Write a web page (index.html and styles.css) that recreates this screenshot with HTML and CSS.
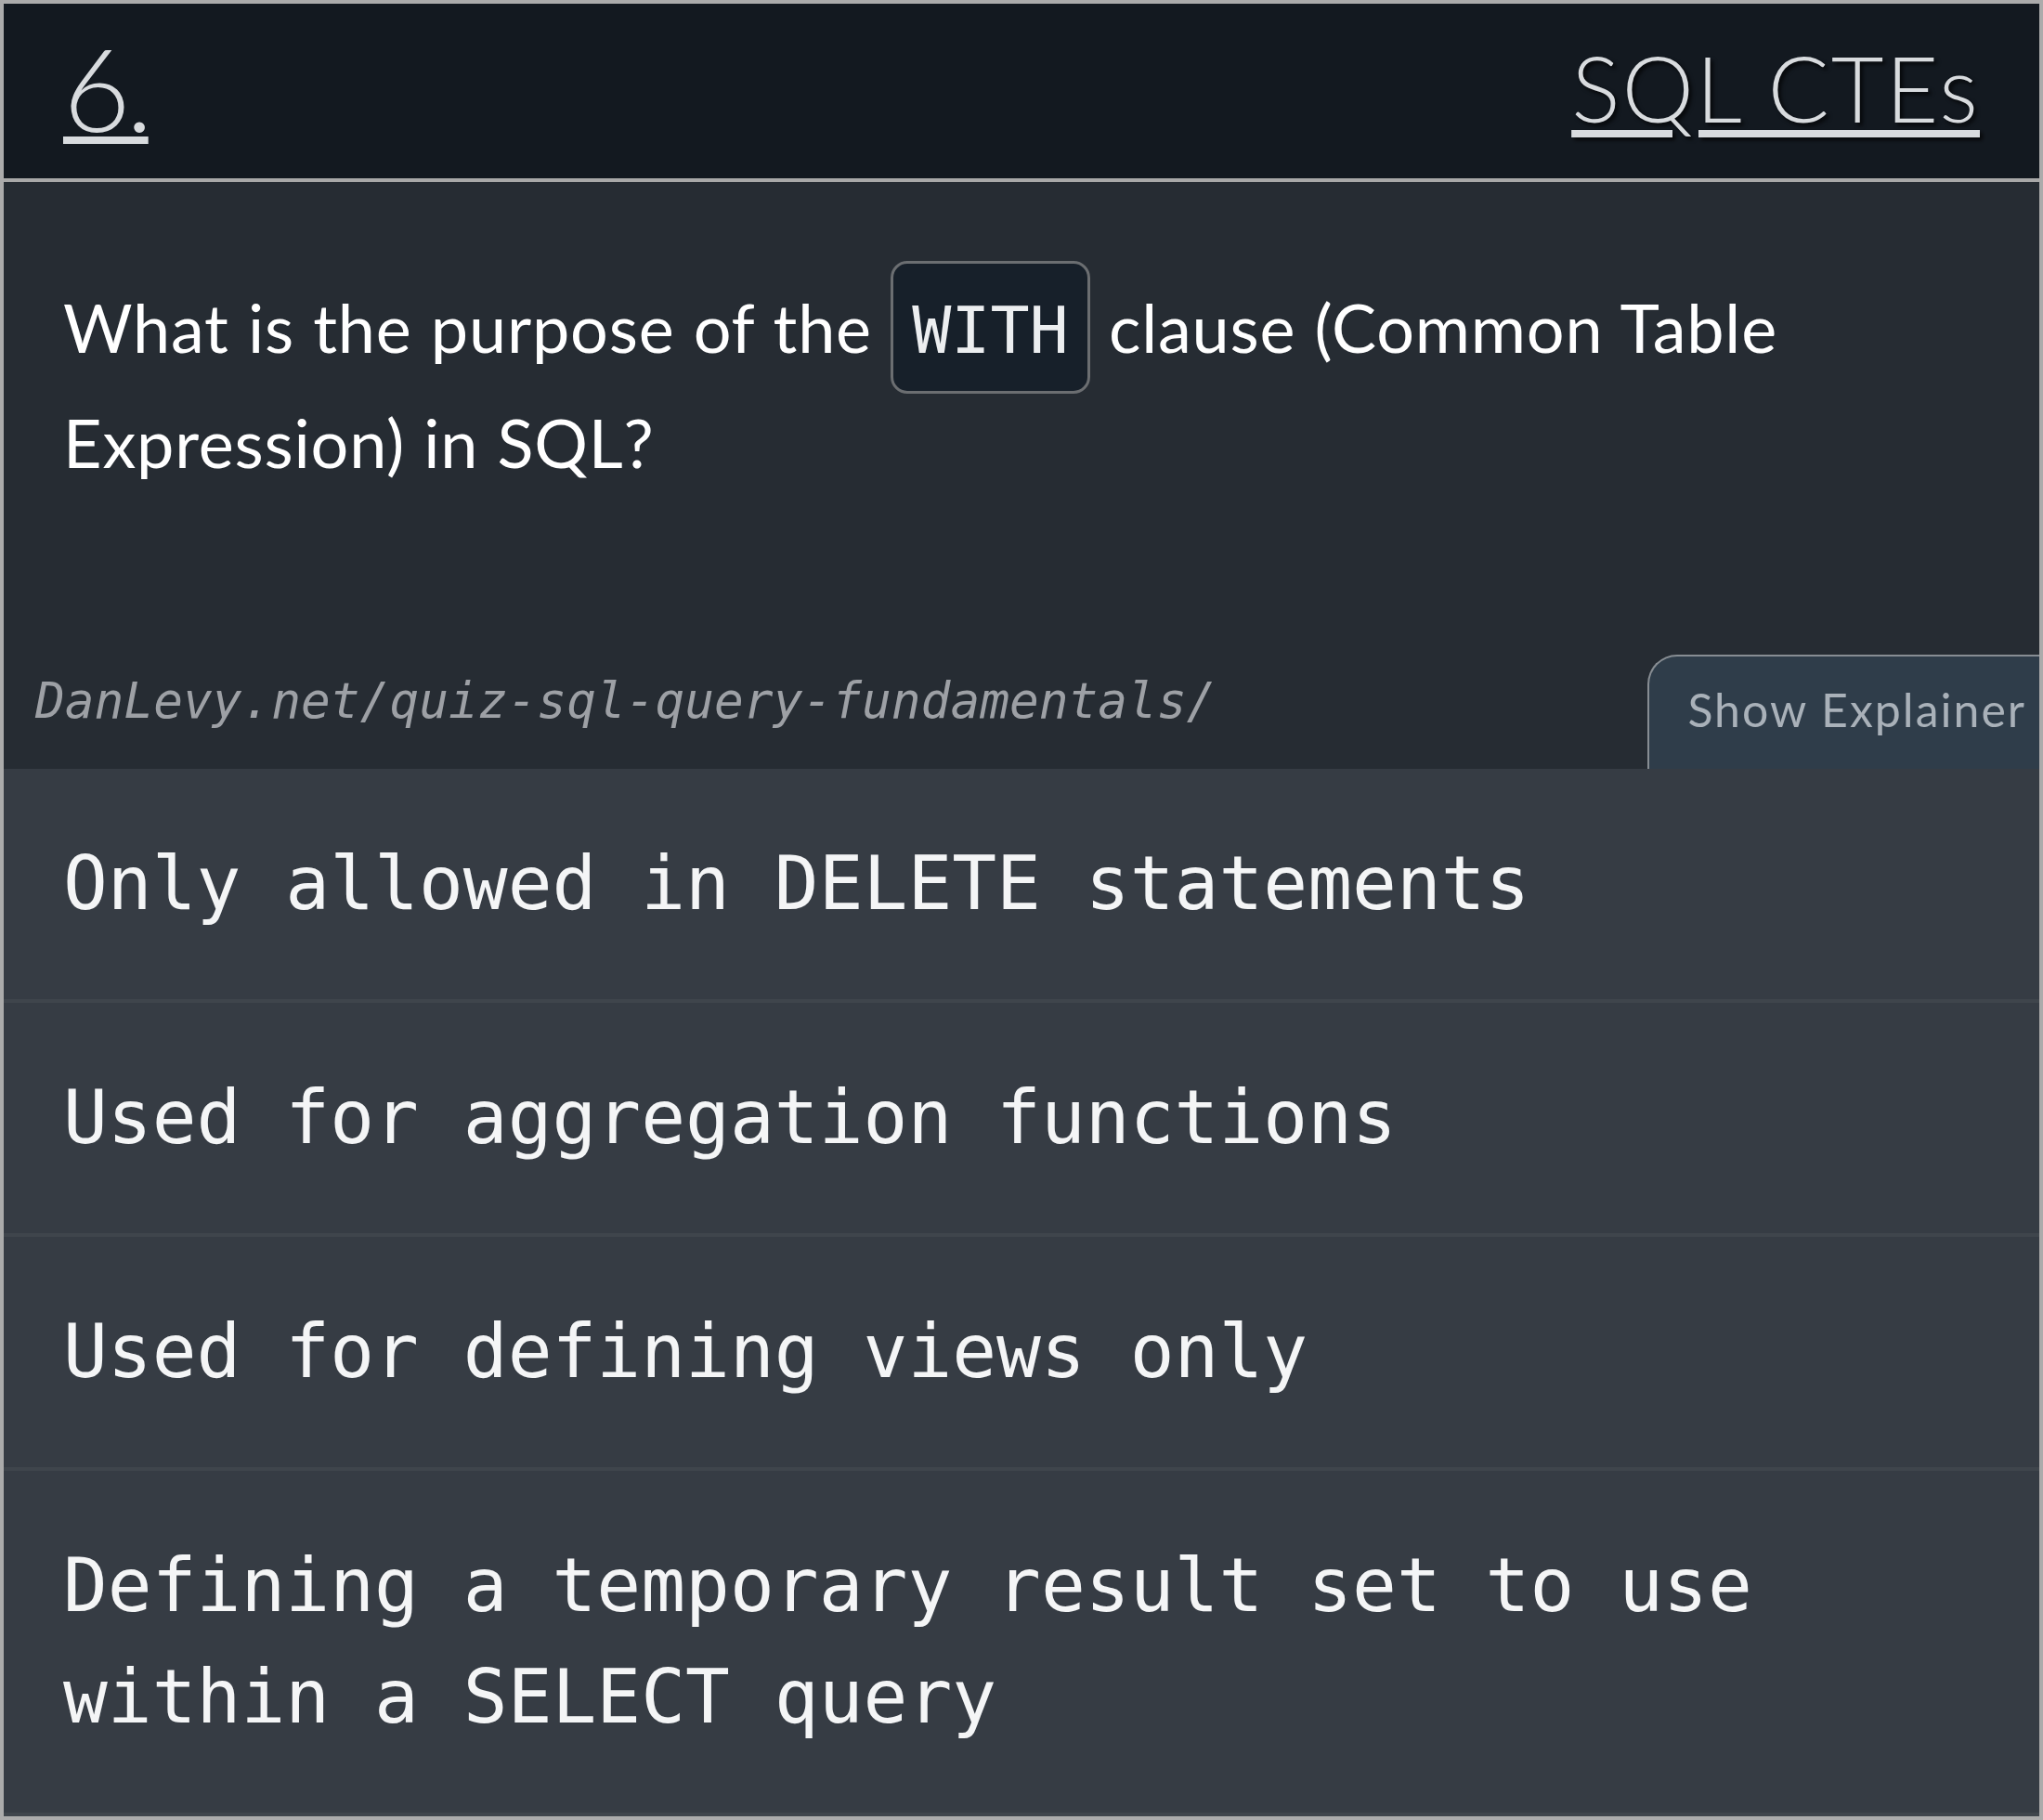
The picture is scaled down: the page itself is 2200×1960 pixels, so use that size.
FILE: index.html
```html
<!DOCTYPE html>
<html lang="en">
<head>
<meta charset="utf-8">
<title>Quiz: SQL CTEs</title>
<link rel="stylesheet" href="styles.css">
</head>
<body>
<article class="card">
  <header class="card-head">
    <a class="num" href="#q6">6.</a>
    <a class="topic" href="#sql-ctes">SQL CTEs</a>
  </header>
  <section class="prompt">
    <p class="question">What is the purpose of the <code class="code">WITH</code> clause (Common Table Expression) in SQL?</p>
    <div class="meta">
      <span class="source">DanLevy.net/quiz-sql-query-fundamentals/</span>
      <button class="explain" type="button">Show Explainer</button>
    </div>
  </section>
  <ul class="options">
    <li class="option">Only allowed in DELETE statements</li>
    <li class="option">Used for aggregation functions</li>
    <li class="option">Used for defining views only</li>
    <li class="option">Defining a temporary result set to use within a SELECT query</li>
  </ul>
</article>
</body>
</html>
```

FILE: styles.css
```css
* { box-sizing: border-box; }

html, body {
  margin: 0;
  padding: 0;
  background: #ababab;
}

.card {
  width: 2200px;
  border: 4px solid #ababab;
  background: #262c33;
  overflow: hidden;
  font-family: "Lato", "Noto Sans", sans-serif;
}

.card-head {
  display: flex;
  justify-content: space-between;
  align-items: flex-start;
  height: 192px;
  padding: 0 64px;
  background: #131920;
  border-bottom: 4px solid #a8a8a8;
}

.num,
.topic {
  color: #d8dbde;
  font-weight: 300;
  line-height: 1;
  text-decoration: underline;
  text-decoration-thickness: 8px;
}

.num {
  font-size: 125px;
  margin-top: 28px;
  letter-spacing: -5px;
  text-underline-offset: 5px;
}

.topic {
  font-size: 98px;
  margin-top: 41px;
  letter-spacing: 2px;
  text-underline-offset: 8px;
  text-shadow: 3px 3px 4px rgba(0, 0, 0, 0.75);
}

.prompt {
  padding-top: 94px;
}

.question {
  margin: 0 64px;
  color: #ffffff;
  font-size: 72px;
  line-height: 124px;
  font-weight: 400;
  letter-spacing: 0.8px;
  word-spacing: 1px;
}

.code {
  font-family: "DejaVu Sans Mono", monospace;
  font-size: 70px;
  line-height: 1;
  letter-spacing: 0;
  word-spacing: 0;
  color: #eceef0;
  background: #17202a;
  border: 3px solid #6b6e71;
  border-radius: 18px;
  padding: 31px 20px 24px;
}

.meta {
  display: flex;
  justify-content: space-between;
  align-items: flex-end;
  margin-top: 167px;
}

.source {
  padding: 0 0 43px 34px;
  font-family: "DejaVu Sans Mono", monospace;
  font-style: italic;
  font-size: 52.8px;
  color: #9da0a5;
}

.explain {
  font-family: "Lato", "Noto Sans", sans-serif;
  font-size: 50px;
  line-height: normal;
  letter-spacing: 2px;
  color: #a9b1b9;
  background: #2f3d4a;
  border: 2px solid #878d93;
  border-right: none;
  border-bottom: none;
  border-top-left-radius: 32px;
  padding: 27px 14px 34px 41px;
  margin: 0;
}

.options {
  list-style: none;
  margin: 0;
  padding: 0;
  background: #363c44;
}

.option {
  padding: 64px 64px;
  border-bottom: 4px solid #3f454c;
  font-family: "DejaVu Sans Mono", monospace;
  font-size: 79.5px;
  line-height: 120px;
  color: #f4f5f6;
}
```
